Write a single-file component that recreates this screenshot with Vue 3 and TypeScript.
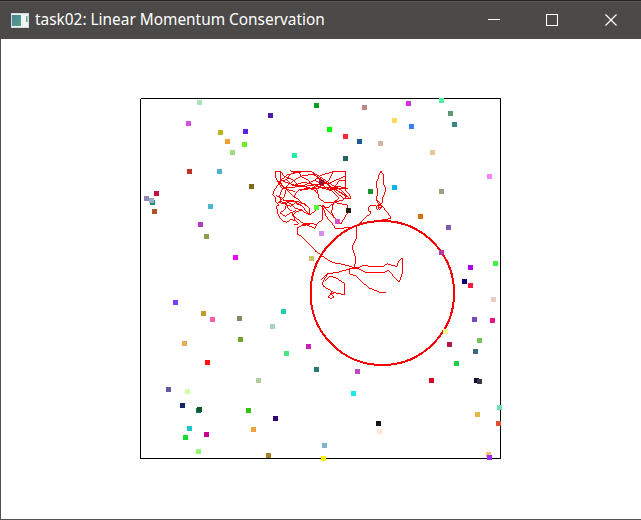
<script setup lang="ts">
type Particle = [x: number, y: number, color: string]

const particles: Particle[] = [
  [197, 100, '#a9e5b8'], [186, 121, '#d44fe4'], [218, 130, '#bbb31e'], [225, 139, '#efa134'],
  [243, 129, '#5a21ec'], [242, 142, '#70ec24'], [230, 150, '#97e07b'], [187, 169, '#bd3323'],
  [217, 169, '#53afd2'], [249, 184, '#806a14'], [154, 191, '#c70f42'], [144, 196, '#948ab8'],
  [150, 200, '#139175'], [149, 198, '#9aafc5'], [152, 209, '#a9552b'], [208, 204, '#50b5d3'],
  [314, 103, '#089f18'], [362, 105, '#bb8886'], [268, 113, '#4c1bab'], [327, 127, '#05f60d'],
  [343, 134, '#fa2836'], [357, 139, '#1c5b90'], [378, 141, '#d7b2a3'], [292, 153, '#1cf29e'],
  [343, 156, '#23635e'], [406, 101, '#db2ee8'], [439, 98, '#55eda1'], [448, 111, '#5a9b76'],
  [392, 118, '#fadc58'], [409, 124, '#397fef'], [452, 122, '#378788'], [430, 150, '#e2cb99'],
  [487, 174, '#ff82fb'], [392, 185, '#05b8e1'], [439, 189, '#92a57c'], [418, 214, '#d5710b'],
  [319, 180, '#921536'], [314, 205, '#57fb37'], [346, 208, '#27200e'], [335, 219, '#d94fc0'],
  [319, 231, '#d68ef5'], [309, 256, '#cdc365'], [368, 189, '#1a9338'], [198, 222, '#b33cc7'],
  [204, 234, '#8f9b4a'], [233, 255, '#f005f5'], [173, 300, '#7541fc'], [201, 311, '#bd9c30'],
  [210, 317, '#ff5cab'], [237, 316, '#808e68'], [281, 309, '#22cdb4'], [270, 324, '#a5d4c9'],
  [238, 337, '#70a72b'], [182, 341, '#e6ad52'], [446, 225, '#805cab'], [439, 250, '#b23ba9'],
  [468, 265, '#aa05ee'], [493, 261, '#44f346'], [462, 279, '#120277'], [468, 283, '#f31a43'],
  [491, 297, '#ebcdc2'], [472, 317, '#7947c2'], [490, 318, '#e8128b'], [443, 329, '#ecfc94'],
  [477, 338, '#76c45b'], [447, 342, '#b0174f'], [205, 360, '#fc120b'], [284, 351, '#4ae680'],
  [306, 344, '#c822b1'], [256, 378, '#b0cd9f'], [166, 387, '#605ba0'], [185, 389, '#d0ffa9'],
  [180, 403, '#13246a'], [196, 408, '#0c7285'], [197, 407, '#0c5a22'], [246, 408, '#32c415'],
  [273, 416, '#34026e'], [187, 426, '#18c8c6'], [251, 427, '#f0a33f'], [183, 435, '#16dc33'],
  [204, 432, '#c40491'], [196, 449, '#8ff773'], [266, 453, '#a98029'], [314, 367, '#247976'],
  [355, 369, '#bf49c0'], [351, 391, '#1ee8ea'], [473, 349, '#396b86'], [454, 361, '#1fd043'],
  [429, 378, '#d40627'], [474, 378, '#1f053a'], [477, 379, '#303b48'], [497, 405, '#76dbb9'],
  [475, 412, '#e4b846'], [496, 421, '#dc502e'], [376, 421, '#16140e'], [377, 429, '#fde5da'],
  [322, 443, '#80b3d4'], [321, 456, '#fbf007'], [486, 452, '#f4c168'], [487, 455, '#9a2df9'],
]

// Trail of the large body, in thirds of a pixel from each section's origin
const trails = [
  {
    origin: 'translate(265 165) scale(.33333)',
    d: `M32,18 L48,20 56,34 84,44 100,60 140,70 185,68 250,72
      M32,18 L30,34 38,50 60,68 90,66 120,60 150,45 170,30 205,20
      M48,46 L66,30 90,24 125,18 140,20 160,40 185,56 205,70 240,92 242,102 258,100 250,84 240,76 242,20
      M48,20 L46,44 50,64 70,74 90,80
      M98,18 L110,35 130,45 155,72 162,100 180,112 205,112 235,105 240,98
      M22,88 L30,96 32,110 42,120 34,124 40,152 54,168 66,172 76,164 90,166 102,176 88,180
      M38,50 L52,72 64,70 58,96 44,110 60,112 75,108 100,110 120,118 132,130 134,150 120,142 108,134 90,130 80,118 66,112
      M88,96 L92,84 104,74 130,70 150,76 160,88 M88,96 L104,106 116,118 128,124
      M62,112 L70,130 82,140 90,166
      M110,134 L92,142 82,150 100,164 116,176 150,190 156,176 172,164 174,120
      M174,120 L190,140 208,158 228,176 250,140 246,120 206,112 200,140 208,160
      M134,150 L150,138 162,122 190,128 205,115
      M174,128 L184,155 205,180 212,192 260,186 286,176
      M156,178 L120,174 98,190 97,208
      M76,18 L140,20 175,42 205,62 230,76 250,98
      M48,46 L80,58 110,66 145,60 190,56 225,40 242,32
      M60,68 L84,48 112,32 145,28 180,50 215,84 238,102
      M205,20 L242,20 M205,20 L190,48 170,62 130,72 104,76
      M38,50 L64,44 78,26 98,18
      M64,44 L82,62 116,52 150,60 200,78 222,100 205,112
      M24,88 L28,74 38,62 48,46
      M34,92 L50,98 58,108 84,106 96,118 120,116
      M40,112 L56,116 76,124 94,112 114,126 130,146
      M52,72 L44,92 46,108 64,118 62,130 46,144 60,154 76,144 94,136
      M88,96 L72,82 60,68
      M250,72 L220,64 190,74 160,66
      M150,45 L190,72 214,74 246,94
      M205,70 L222,48 242,46`,
  },
  {
    origin: 'translate(290 220) scale(.33333)',
    d: `M22,24 L22,42 34,48 62,76 78,95 92,104 108,116 128,128 150,131 178,138 194,144
      M200,18 L199,55 186,82 197,113 194,144
      L206,142 222,136 240,139 280,139 292,131 300,134 320,139 328,122 337,115 337,160 328,187 310,168 294,150 284,158 228,158 206,146 178,147 146,156 112,162 94,178
      M178,147 L180,162 196,167 214,184 236,203 272,218 278,216 287,218
      M112,163 L96,190 102,200 132,218 160,223 164,222 163,190 135,172 118,169 104,184
      M132,218 L124,224 132,230 124,236 115,232 124,218 M124,214 L124,226
      M22,24 L36,16 60,14`,
  },
  {
    origin: 'translate(345 160) scale(.33333)',
    d: `M108,34 L103,40 101,52 94,66 96,84 97,100 94,120 99,130 104,136
      M108,34 L115,44 115,70 121,84 120,98 114,112 112,128 104,134 98,150 94,142 95,138 110,138 108,145 102,150
      M106,132 L137,170 136,176 106,181
      M94,138 L82,137 78,134 69,145 70,152 79,155 75,163 60,173 48,188 36,196
      M94,120 L106,130 98,142 108,142`,
  },
]
</script>

<template>
  <div class="window">
    <header class="titlebar">
      <svg class="app-icon" width="18" height="15" viewBox="0 0 18 15">
        <defs>
          <linearGradient id="pane" x1="0" y1="0" x2="1" y2="1">
            <stop offset="0" stop-color="#4a7f9c" />
            <stop offset="1" stop-color="#55a583" />
          </linearGradient>
        </defs>
        <rect width="18" height="15" fill="#d5dadd" />
        <rect x="1" y="1" width="16" height="13" fill="#f1f3f4" />
        <rect x="1" y="2" width="9" height="11" fill="url(#pane)" />
        <rect x="15" y="3" width="1.5" height="6" fill="#63a38c" />
      </svg>
      <h1 class="title">task02: Linear Momentum Conservation</h1>
      <div class="controls">
        <svg width="58" height="35" viewBox="0 0 58 35"><path d="M17 16.5H29" /></svg>
        <svg width="58" height="35" viewBox="0 0 58 35"><path d="M17.5 11.5H28.5V22.5H17.5Z" /></svg>
        <svg class="close" width="54" height="35" viewBox="0 0 54 35"><path d="M18.5 11.5L29.5 22.5M29.5 11.5L18.5 22.5" /></svg>
      </div>
    </header>
    <svg class="scene" width="640" height="480" viewBox="1 39 640 480">
      <path class="box" d="M141 98.5H500.5V458.5H140.5V99" />
      <ellipse class="body" cx="382.3" cy="293" rx="71.8" ry="72" />
      <g v-for="trail in trails" :key="trail.origin" :transform="trail.origin">
        <path class="trail" :d="trail.d" />
      </g>
      <rect
        v-for="([x, y, color], i) in particles"
        :key="i"
        :x="x"
        :y="y"
        width="5"
        height="5"
        :fill="color"
      />
    </svg>
  </div>
</template>

<style>
body {
  margin: 0;
  overflow: hidden;
}
</style>

<style scoped>
.window {
  box-sizing: border-box;
  width: 641px;
  height: 520px;
  background: #fff;
  border-left: 1px solid #555350;
  border-bottom: 1px solid #555350;
}
.titlebar {
  box-sizing: border-box;
  display: flex;
  align-items: center;
  height: 39px;
  margin-left: -1px;
  padding: 0 0 0 11px;
  background: #4c4a48;
  border-top: 1px solid #262423;
  box-shadow: inset 0 1px #5b5957;
}
.app-icon {
  flex: none;
}
.title {
  margin: 0 0 0 6px;
  color: #fff;
  font: 400 15.4px/22px "Noto Sans", "Open Sans", sans-serif;
  white-space: nowrap;
}
.controls {
  display: flex;
  margin-left: auto;
}
.controls svg {
  fill: none;
  stroke: #fff;
  stroke-width: 1;
  shape-rendering: crispEdges;
}
.controls .close {
  shape-rendering: auto;
  stroke-width: 1.2;
}
.scene {
  display: block;
  shape-rendering: crispEdges;
}
.box {
  fill: none;
  stroke: #000;
}
.body {
  fill: none;
  stroke: #f00;
  stroke-width: 2;
}
.trail {
  fill: none;
  stroke: #f00;
  stroke-width: 3;
}
</style>
